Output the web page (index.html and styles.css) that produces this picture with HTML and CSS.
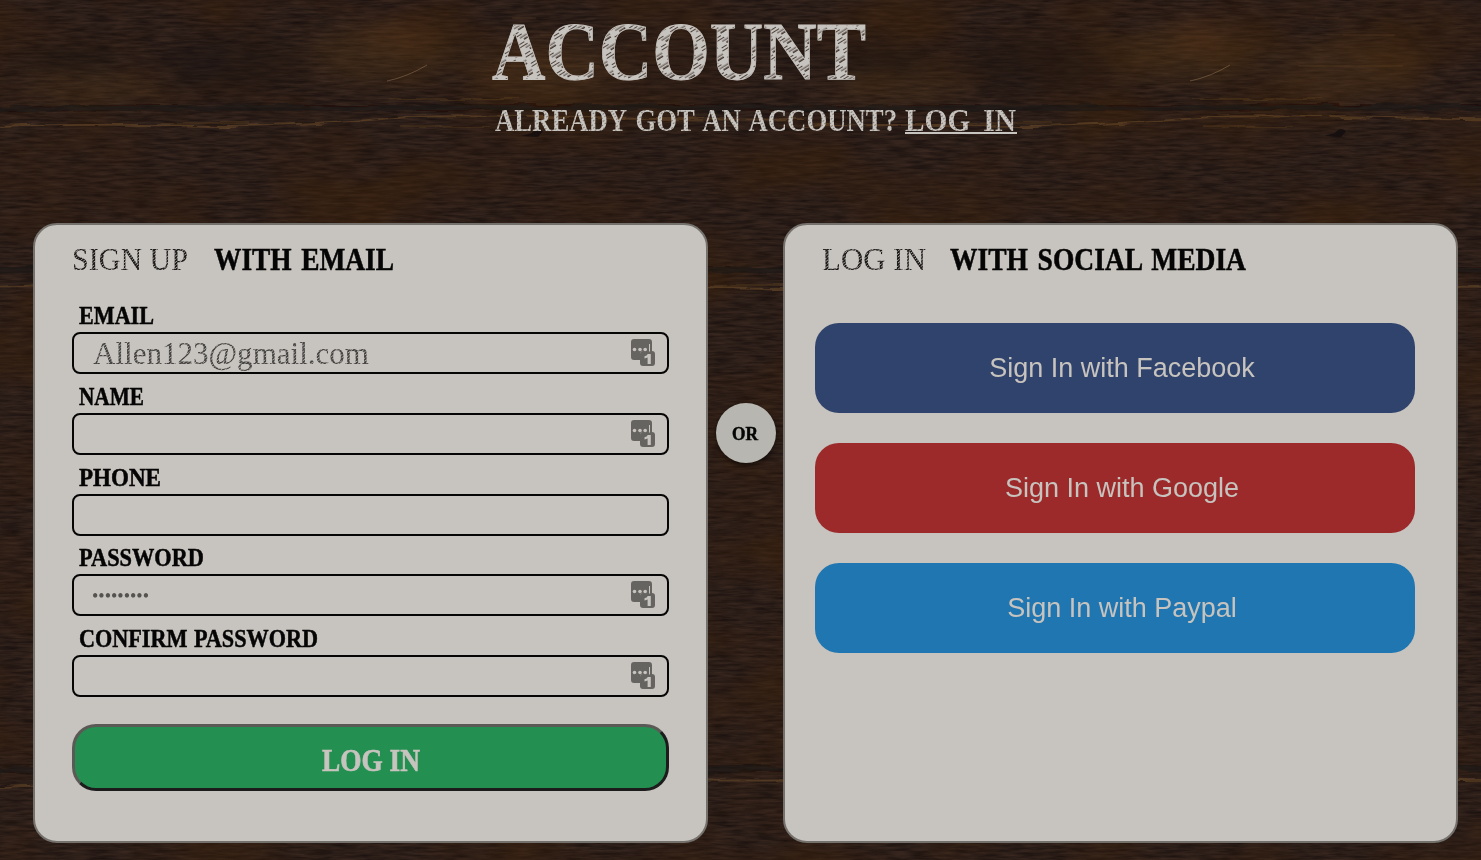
FILE: index.html
```html
<!DOCTYPE html>
<html lang="en">
<head>
<meta charset="utf-8">
<title>Account</title>
<link rel="stylesheet" href="styles.css">
</head>
<body>
<svg class="wood" width="1481" height="860" aria-hidden="true">
  <defs>
    <filter id="grain" x="0" y="0" width="100%" height="100%" color-interpolation-filters="sRGB">
      <feTurbulence type="fractalNoise" baseFrequency="0.045 0.36" numOctaves="3" seed="8"/>
      <feColorMatrix values="0.16 0 0 0 0.088  0.12 0 0 0 0.054  0.09 0 0 0 0.048  0 0 0 0 1"/>
    </filter>
    <filter id="stain" x="0" y="0" width="100%" height="100%" color-interpolation-filters="sRGB">
      <feTurbulence type="fractalNoise" baseFrequency="0.007 0.013" numOctaves="3" seed="21"/>
      <feColorMatrix values="0 0 0 0 0.25  0 0 0 0 0.14  0 0 0 0 0.04  2.6 0 0 0 -1.1"/>
    </filter>
    <filter id="soft" x="-20%" y="-50%" width="140%" height="200%" color-interpolation-filters="sRGB"><feGaussianBlur stdDeviation="16 10"/></filter>
    <filter id="rough" x="-2%" y="-100%" width="104%" height="300%"><feTurbulence type="fractalNoise" baseFrequency="0.03 0.2" numOctaves="2"/><feDisplacementMap in="SourceGraphic" scale="7"/></filter>
    <pattern id="hatch" width="17" height="11" patternUnits="userSpaceOnUse" patternTransform="rotate(-32)">
      <rect width="17" height="11" fill="#c7c3be"/><path d="M0 1.5H9M5 4.2H16M1 9.5H7" stroke="#30221c" stroke-width=".8"/><path d="M8 7.2H15" stroke="#30221c" stroke-width="1.4"/>
    </pattern>
    <pattern id="chalk" width="4" height="3" patternUnits="userSpaceOnUse" patternTransform="rotate(-35)">
      <rect width="4" height="3" fill="#c7c3be"/><path d="M0 1.5H2" stroke="#54483f" stroke-width=".6"/>
    </pattern>
    <pattern id="pencil" width="4" height="2.4" patternUnits="userSpaceOnUse" patternTransform="rotate(-38)">
      <rect width="4" height="2.4" fill="#1c1b1a"/><path d="M0 1.2H3" stroke="#c7c3be" stroke-width=".7"/>
    </pattern>
    <pattern id="faint" width="4" height="2.4" patternUnits="userSpaceOnUse" patternTransform="rotate(-38)">
      <rect width="4" height="2.4" fill="#444341"/><path d="M0 1.2H3" stroke="#c7c3be" stroke-width=".7"/>
    </pattern>
    <g id="seam" filter="url(#rough)" fill="none">
      <path d="M0 110C160 106 290 109 400 108S650 106 803 108" stroke="#151010" stroke-width="6" opacity=".5"/>
      <path d="M0 127C100 122 170 126 220 126S360 121 410 117S650 122 803 119" stroke="#71502d" stroke-width="2" opacity=".5"/>
      <path d="M160 123H250M390 99H520M400 126H490" stroke="#765027" opacity=".5"/>
    </g>
    <g id="plank">
      <g filter="url(#soft)">
        <ellipse cx="395" cy="36" rx="32" ry="20" fill="#74401c" opacity=".24"/>
        <ellipse cx="380" cy="55" rx="75" ry="30" fill="#5c3c19" opacity=".26"/>
        <ellipse cx="545" cy="70" rx="75" ry="32" fill="#65401a" opacity=".26"/>
        <ellipse cx="95" cy="88" rx="75" ry="18" fill="#60401c" opacity=".25"/>
        <ellipse cx="75" cy="60" rx="50" ry="11" fill="#15120f" opacity=".5"/>
        <ellipse cx="230" cy="65" rx="75" ry="28" fill="#171210" opacity=".35"/>
      </g>
      <use href="#seam"/>
      <path d="M495 66H600M512 18H536M540 35H592" fill="none" stroke="#765027" opacity=".3"/>
      <path d="M387 81Q407 77 427 65" fill="none" stroke="#9a7957" opacity=".5"/>
      <path d="M521 136L532 133Q537 126 543 131L538 137Z" fill="#110d0e" opacity=".8"/>
    </g>
  </defs>
  <rect width="1481" height="860" filter="url(#grain)"/>
  <rect width="1481" height="860" filter="url(#stain)" opacity=".45"/>
  <use href="#plank"/><use href="#plank" x="803"/>
  <use href="#seam" x="-250" y="162"/><use href="#seam" x="553" y="162"/><use href="#seam" x="1356" y="162"/>
  <use href="#seam" y="661"/><use href="#seam" x="803" y="661"/>
</svg>
<main class="page">
  <header class="heading">
    <svg class="title" width="390" height="100"><text class="script strong" x="2" y="79" font-size="82" textLength="374" lengthAdjust="spacingAndGlyphs" fill="url(#hatch)">ACCOUNT</text></svg>
    <div class="prompt">
      <svg width="405" height="44"><text class="script strong" x="0" y="31" font-size="31" word-spacing="3" textLength="402" lengthAdjust="spacingAndGlyphs" fill="url(#chalk)">ALREADY GOT AN ACCOUNT?</text></svg>
      <svg width="120" height="44"><text class="script strong" x="0" y="31" font-size="31" word-spacing="6" textLength="111" lengthAdjust="spacingAndGlyphs" fill="url(#chalk)">LOG IN</text><path d="M0 33H112" stroke="#c7c3be" stroke-width="2"/></svg>
    </div>
  </header>
  <div class="panels">
    <section class="card signup">
      <svg class="caption" width="597" height="64"><text class="script" x="0" y="35" font-size="31" textLength="116" lengthAdjust="spacingAndGlyphs" fill="url(#pencil)">SIGN UP</text><text class="script strong ink" x="142" y="35" font-size="31" word-spacing="3" textLength="180" lengthAdjust="spacingAndGlyphs">WITH EMAIL</text></svg>
      <form class="fields">
        <div class="field"><svg class="label" width="300" height="33"><text class="script strong ink" x="7" y="25" font-size="25.5" textLength="75" lengthAdjust="spacingAndGlyphs">EMAIL</text></svg>
          <div class="input"><svg width="300" height="38"><text class="script" x="19" y="30" font-size="31" textLength="276" lengthAdjust="spacingAndGlyphs" fill="url(#faint)">Allen123@gmail.com</text></svg><svg class="key" width="24" height="27"><use href="#keyicon"/></svg></div></div>
        <div class="field"><svg class="label" width="300" height="33"><text class="script strong ink" x="7" y="25" font-size="25.5" textLength="65" lengthAdjust="spacingAndGlyphs">NAME</text></svg>
          <div class="input"><svg class="key" width="24" height="27"><use href="#keyicon"/></svg></div></div>
        <div class="field"><svg class="label" width="300" height="33"><text class="script strong ink" x="7" y="25" font-size="25.5" textLength="82" lengthAdjust="spacingAndGlyphs">PHONE</text></svg>
          <div class="input"></div></div>
        <div class="field"><svg class="label" width="300" height="33"><text class="script strong ink" x="7" y="25" font-size="25.5" textLength="125" lengthAdjust="spacingAndGlyphs">PASSWORD</text></svg>
          <div class="input"><svg width="100" height="38"><text class="script" x="18" y="26" font-size="18" textLength="57" lengthAdjust="spacingAndGlyphs" fill="#555350">•••••••••</text></svg><svg class="key" width="24" height="27"><use href="#keyicon"/></svg></div></div>
        <div class="field"><svg class="label" width="300" height="33"><text class="script strong ink" x="7" y="25" font-size="25.5" word-spacing="1" textLength="239" lengthAdjust="spacingAndGlyphs">CONFIRM PASSWORD</text></svg>
          <div class="input"><svg class="key" width="24" height="27"><use href="#keyicon"/></svg></div></div>
        <button class="submit" type="button"><svg width="108" height="44"><text class="script strong" x="5" y="33" font-size="32" textLength="98" lengthAdjust="spacingAndGlyphs" fill="#c7c3be" stroke="#c7c3be" stroke-width=".6">LOG IN</text></svg></button>
      </form>
    </section>
    <div class="or"><svg width="28" height="24"><text class="script strong ink" x="0" y="19" font-size="19" textLength="26" lengthAdjust="spacingAndGlyphs">OR</text></svg></div>
    <section class="card social">
      <svg class="caption" width="600" height="64"><text class="script" x="7" y="35" font-size="31" textLength="104" lengthAdjust="spacingAndGlyphs" fill="url(#pencil)">LOG IN</text><text class="script strong ink" x="135" y="35" font-size="31" word-spacing="3" textLength="296" lengthAdjust="spacingAndGlyphs">WITH SOCIAL MEDIA</text></svg>
      <div class="providers">
        <button class="provider facebook" type="button">Sign In with Facebook</button>
        <button class="provider google" type="button">Sign In with Google</button>
        <button class="provider paypal" type="button">Sign In with Paypal</button>
      </div>
    </section>
  </div>
</main>
<svg class="symbols" width="0" height="0" aria-hidden="true">
  <symbol id="keyicon" viewBox="0 0 24 27">
    <path d="M3 0H18Q21 0 21 3V12H12Q9 12 9 15V21H3Q0 21 0 18V3Q0 0 3 0Z" fill="#666461"/>
    <rect x="9" y="12" width="15" height="15" rx="3" fill="#666461"/>
    <circle cx="3.5" cy="10.5" r="1.8" fill="#c7c3be"/><circle cx="9" cy="10.5" r="1.8" fill="#c7c3be"/><circle cx="14.2" cy="10.5" r="1.8" fill="#c7c3be"/>
    <path d="M18.5 5V12.5" stroke="#c7c3be"/>
    <path d="M16.8 15H19.8V25H16.6V18.6L13.5 19.6V17.2Q16 16.7 16.8 15Z" fill="#c7c3be"/>
  </symbol>
</svg>
</body>
</html>
```

FILE: styles.css
```css
* { box-sizing: border-box; }
body { margin: 0; width: 1481px; height: 860px; overflow: hidden; background: #2d1f1a; font-family: "Liberation Sans", Arial, sans-serif; }
svg { display: block; overflow: visible; }
.wood { position: absolute; inset: 0; z-index: -1; overflow: hidden; }
.symbols { position: absolute; }
.script { font-family: "Liberation Serif", "Times New Roman", serif; }
.strong { font-weight: 700; }
.ink { fill: #050505; stroke: #050505; stroke-width: .5px; }
.page { height: 860px; display: flex; flex-direction: column; }
.heading { height: 223px; padding-left: 490px; }
.title { height: 100px; }
.title text { stroke: #c7c3be; stroke-width: .8px; }
.prompt { display: flex; gap: 5px; padding-left: 5px; }
.panels { display: flex; align-items: flex-start; padding-left: 33px; }
.card { width: 675px; height: 620px; border: 2px solid #74716d; border-radius: 24px; background: #c7c3be; flex: none; }
.signup { padding: 10px 37px; }
.social { padding: 10px 30px; }
.caption { height: 64px; }
.fields { display: flex; flex-direction: column; }
.field { height: 80.75px; }
.label { height: 33px; }
.input { height: 42px; border: 2px solid #050505; border-radius: 8px; display: flex; justify-content: space-between; align-items: center; padding-right: 12px; }
.key { margin: 0 0 1px auto; }
.submit { width: 597px; height: 67px; margin-top: 21px; padding: 6px 0 0; border: 3px solid; border-color: #5b5956 #1d1c1c #1d1c1c #5b5956; border-radius: 24px; background: #239051; display: flex; align-items: center; justify-content: center; }
.or { width: 60px; height: 60px; margin: 180px 7px 0 8px; border-radius: 50%; background: #b7b6b0; display: flex; align-items: center; justify-content: center; box-shadow: 0 2px 5px #0008; flex: none; }
.providers { display: flex; flex-direction: column; gap: 30px; padding-top: 24px; }
.provider { width: 600px; height: 90px; border: 0; border-radius: 24px; padding: 0 0 0 14px; color: #c7c3be; font: 27px "Liberation Sans", Arial, sans-serif; }
.facebook { background: #30436c; }
.google { background: #9c2a2a; }
.paypal { background: #2076b0; }
```
